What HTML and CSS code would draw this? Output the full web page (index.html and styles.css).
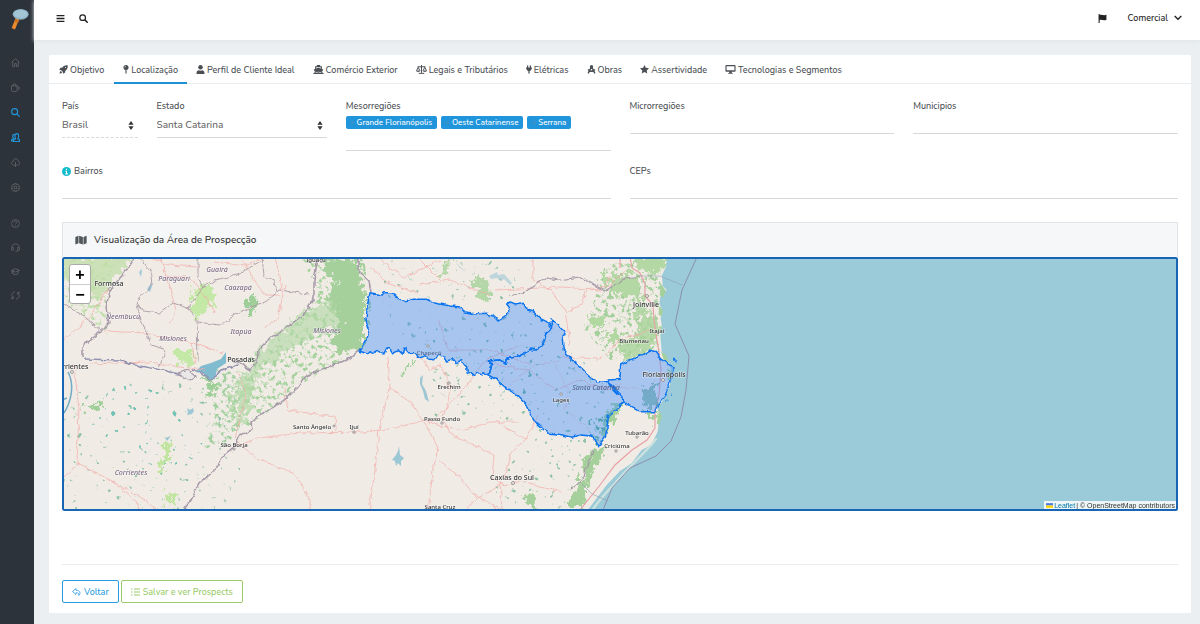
FILE: index.html
```
<!DOCTYPE html>
<html lang="pt-BR">
<head>
<meta charset="utf-8">
<meta name="viewport" content="width=device-width, initial-scale=1">
<title>Localização</title>
<link rel="stylesheet" href="styles.css">
</head>
<body>
<svg class="defs" aria-hidden="true">
  <symbol id="rocket" viewBox="0 0 16 16"><path d="M15.500.5C10.500 0 7.500 2 5.500 5H2.500L.5 9l3.500.3 2.700 2.700.3 3.500 4-2v-3c3-2 5-5 4.500-10zM3.300 10.500C1.500 11.500 1 13.500 1 15c1.500 0 3.500-.5 4.500-2.300z"/><circle cx="11.500" cy="4.500" r="1" fill="#fff"/></symbol>
  <symbol id="pin" viewBox="0 0 10 16"><circle cx="5" cy="4.500" r="4.500"/><path d="M4 9h2v5l-1 2-1-2z"/><path d="M5 2.200a2.300 2.300 0 0 0-2.300 2.300" fill="none" stroke="#fff" stroke-width=".8"/></symbol>
  <symbol id="user" viewBox="0 0 16 16"><circle cx="8" cy="4" r="4"/><path d="M1 16v-2.500C1 11 3 9.300 5 9.300c2 1 4 1 6 0 2 0 4 1.700 4 4.200V16z"/></symbol>
  <symbol id="ship" viewBox="0 0 18 16"><path d="M6 0h6v2h3v5l2.500 1-2 4c-1.500 0-2 1-3.200 1S10.500 12 9 12s-2 1-3.300 1S4 12 2.500 12l-2-4L3 7V2h3zM5 4v2.300L9 5l4 1.300V4zM0 14c2 0 2-1 3-1s2 1.300 3 1.300 2-1.300 3-1.300 2 1.300 3 1.300 2-1.300 3-1.300 1 1 3 1v2H0z"/></symbol>
  <symbol id="scale" viewBox="0 0 20 16"><path d="M10 0v14M3 3h14M5 15h10M1 10l3-6 3 6M13 10l3-6 3 6" fill="none" stroke="currentColor" stroke-width="1.800"/><path d="M0 10h8c-.5 3.500-7.500 3.500-8 0zM12 10h8c-.5 3.500-7.500 3.500-8 0z"/></symbol>
  <symbol id="plug" viewBox="0 0 12 16"><path d="M2 0h2.500v4h3V0H10v4h2v2.500h-1c0 2.500-1.500 4-3.700 4.500v5H4.700v-5C2.500 10.500 1 9 1 6.500H0V4h2z"/></symbol>
  <symbol id="compass" viewBox="0 0 16 16"><path d="M8 3L2 15M8 3l6 12M2 8c3 4 9 4 12 0" fill="none" stroke="currentColor" stroke-width="2.500"/><circle cx="8" cy="3" r="3"/></symbol>
  <symbol id="star" viewBox="0 0 16 16"><path d="M8 0l2.400 5.100 5.600.7-4.100 3.900 1 5.600L8 12.600l-4.900 2.700 1-5.600L0 5.800l5.600-.7z"/></symbol>
  <symbol id="screen" viewBox="0 0 18 16"><path d="M1.500 0h15C17.500 0 18 .7 18 1.500v9c0 .8-.5 1.500-1.500 1.500H11l.5 2H13v1.500H5V14h1.500l.5-2H1.500C.5 12 0 11.300 0 10.500v-9C0 .7.5 0 1.500 0zM2 2v7.500h14V2z"/></symbol>
  <symbol id="map-i" viewBox="0 0 18 16"><path d="M0 3l5-2v12l-5 2zM6 1l6 2v12l-6-2zM13 3l5-2v12l-5 2z"/></symbol>
  <symbol id="search" viewBox="0 0 16 16"><circle cx="6.500" cy="6.500" r="5" fill="none" stroke="currentColor" stroke-width="2.200"/><path d="M10 10l5.500 5.500" stroke="currentColor" stroke-width="2.600"/></symbol>
  <symbol id="reply" viewBox="0 0 18 16"><path d="M8 1L1 7l7 6v-3.500c5-.3 6 2 5.500 5.500 3-2.500 5-10-5.500-10.500z" fill="none" stroke="currentColor" stroke-width="1.600"/></symbol>
  <symbol id="list" viewBox="0 0 18 16"><path d="M0 2h3M0 8h3M0 14h3M6 2h12M6 8h12M6 14h12" stroke="currentColor" stroke-width="2"/></symbol>
  <symbol id="arrows" viewBox="0 0 8 12"><path d="M4 0l3.500 5h-7zM4 12L.5 7h7z"/></symbol>
  <symbol id="s-home" viewBox="0 0 16 16"><path d="M1 8l7-7 7 7M3 6.500V15h3.500v-5h3v5H13V6.500"/></symbol>
  <symbol id="s-cup" viewBox="0 0 16 16"><path d="M1 5h10v8c0 1-1 2-2 2H3c-1 0-2-1-2-2zM3 5c0-5 6-5 6 0M11 7h2c3 0 3 4 0 4h-2"/></symbol>
  <symbol id="s-search" viewBox="0 0 16 16"><circle cx="6.500" cy="6.500" r="5.300"/><path d="M10.500 10.500l5 5"/></symbol>
  <symbol id="s-users" viewBox="0 0 16 16"><path d="M4 15h11.500c0-3-1-4-3-4.500-1-1 1-2 1-5C13.500-.5 7-.5 7 5.500c0 3 2 4 1 5-3 .5-4 1.500-4 4.500zM6.500 3C3 2 2 6 4.500 9c0 2-4 1-4 5H4"/></symbol>
  <symbol id="s-cloud" viewBox="0 0 16 16"><path d="M5 12H4c-4 0-4-6 0-6 0-6 9-6 9 0 4 0 4 6 0 6h-2M8 7v8M5.500 12.500L8 15l2.500-2.500"/></symbol>
  <symbol id="s-gear" viewBox="0 0 16 16"><path d="M6.500 1h3l.5 2 2-1 2 2-1 2 2 .7v3L13 10l1 2-2 2-2-1-.5 2h-3L6 13l-2 1-2-2 1-2-2-.3v-3L3 6 2 4l2-2 2 1z"/><circle cx="8" cy="8" r="2.500"/></symbol>
  <symbol id="s-help" viewBox="0 0 16 16"><circle cx="8" cy="8" r="7"/><path d="M5.700 6c0-3.500 4.800-3 4.600 0C10.200 7.500 8 8 8 9.500M8 11.300v1.500"/></symbol>
  <symbol id="s-head" viewBox="0 0 16 16"><path d="M2 9C-1-1 17-1 14 9M2 8h2v5H2c-2-1-2-4 0-5zM14 8h-2v5h2c2-1 2-4 0-5zM13 13c-1 2-3 2-5 2"/></symbol>
  <symbol id="s-cap" viewBox="0 0 16 16"><path d="M1 6l7-3 7 3-7 3zM3.500 7v5c2 2 7 2 9 0V7M2 6.500V12"/></symbol>
  <symbol id="s-sync" viewBox="0 0 16 16"><path d="M7 1.500C1 2 0 9 3.500 13M4 9.500v4H0M9 14.500c6-.5 7-7.500 3.500-11.500M12 6.500v-4h4"/></symbol>
</svg>

<nav class="sidebar" aria-label="Menu principal">
  <a class="logo" href="#" aria-label="Início"><svg viewBox="0 0 54 64"><path d="M17 36L9 56" stroke="#e98b2c" stroke-width="11" stroke-linecap="square"/><ellipse cx="29" cy="18" rx="24" ry="16" fill="#8fb4c6"/><ellipse cx="29" cy="17" rx="20" ry="12" fill="#a3c6d6"/><path d="M13 32l12 4-4 8-10-3z" fill="#c9762a"/></svg></a>
  <div class="group main-links">
    <a href="#" aria-label="Painel"><svg><use href="#s-home"/></svg></a>
    <a href="#" aria-label="Café"><svg><use href="#s-cup"/></svg></a>
    <a href="#" class="on" aria-label="Buscar"><svg><use href="#s-search"/></svg></a>
    <a href="#" class="on" aria-label="Clientes"><svg><use href="#s-users"/></svg></a>
    <a href="#" aria-label="Download"><svg><use href="#s-cloud"/></svg></a>
    <a href="#" aria-label="Configurações"><svg><use href="#s-gear"/></svg></a>
  </div>
  <div class="group help-links">
    <a href="#" aria-label="Ajuda"><svg><use href="#s-help"/></svg></a>
    <a href="#" aria-label="Suporte"><svg><use href="#s-head"/></svg></a>
    <a href="#" aria-label="Treinamento"><svg><use href="#s-cap"/></svg></a>
    <a href="#" aria-label="Atualizar"><svg><use href="#s-sync"/></svg></a>
  </div>
</nav>

<div class="page">
  <header class="topbar">
    <button type="button" class="plain" aria-label="Menu"><svg class="ic" viewBox="0 0 16 16"><path d="M1 3h14M1 8h14M1 13h14" stroke="currentColor" stroke-width="2.400"/></svg></button>
    <button type="button" class="plain" aria-label="Pesquisar"><svg class="ic"><use href="#search"/></svg></button>
    <button type="button" class="plain flag" aria-label="Idioma"><svg class="ic" viewBox="0 0 16 16"><path d="M1 0h2v2c4-2 6 1.500 12-.5V10c-5 2.500-8-1-12 .5V16H1z"/></svg></button>
    <button type="button" class="plain account">Comercial <svg class="chev" viewBox="0 0 12 8"><path d="M1 1l5 5 5-5" fill="none" stroke="currentColor" stroke-width="2"/></svg></button>
  </header>

  <main class="card">
    <nav class="tabs" aria-label="Etapas">
      <a href="#"><svg class="ic"><use href="#rocket"/></svg>Objetivo</a>
      <a href="#" class="active" aria-current="page"><svg class="ic slim"><use href="#pin"/></svg>Localização</a>
      <a href="#"><svg class="ic"><use href="#user"/></svg>Perfil de Cliente Ideal</a>
      <a href="#"><svg class="ic wide"><use href="#ship"/></svg>Comércio Exterior</a>
      <a href="#"><svg class="ic wide"><use href="#scale"/></svg>Legais e Tributários</a>
      <a href="#"><svg class="ic slim"><use href="#plug"/></svg>Elétricas</a>
      <a href="#"><svg class="ic"><use href="#compass"/></svg>Obras</a>
      <a href="#"><svg class="ic"><use href="#star"/></svg>Assertividade</a>
      <a href="#"><svg class="ic wide"><use href="#screen"/></svg>Tecnologias e Segmentos</a>
    </nav>

    <form class="body">
      <div class="fields">
        <div class="field c1"><label for="pais">País</label>
          <div class="select dashed"><select id="pais"><option>Brasil</option></select><svg><use href="#arrows"/></svg></div></div>
        <div class="field c2"><label for="estado">Estado</label>
          <div class="select"><select id="estado"><option>Santa Catarina</option></select><svg><use href="#arrows"/></svg></div></div>
        <div class="field c3"><label for="meso">Mesorregiões</label>
          <div class="tagbox"><span class="tag"><i>×</i>Grande Florianópolis</span><span class="tag"><i>×</i>Oeste Catarinense</span><span class="tag"><i>×</i>Serrana</span><input id="meso" type="text"></div></div>
        <div class="field c3"><label for="micro">Microrregiões</label><input id="micro" type="text"></div>
        <div class="field c3"><label for="mun">Municipios</label><input id="mun" type="text"></div>
        <div class="field c6"><label for="bairros"><svg class="info" viewBox="0 0 16 16"><circle cx="8" cy="8" r="8" fill="#12bccb"/><path d="M8 3v2.500M6 7.500h2V12M6 12.300h4.500" fill="none" stroke="#fff" stroke-width="2"/></svg>Bairros</label><input id="bairros" type="text"></div>
        <div class="field c6"><label for="ceps">CEPs</label><input id="ceps" type="text"></div>
      </div>

      <section class="mapcard">
        <h2><svg><use href="#map-i"/></svg>Visualização da Área de Prospecção</h2>
        <div class="map">
          <svg class="tiles" viewBox="62 257 1116 254" preserveAspectRatio="xMinYMin slice" role="img" aria-label="Mapa da área de prospecção">
            <defs>
              <filter id="rag" x="0" y="240" width="1300" height="290" filterUnits="userSpaceOnUse" color-interpolation-filters="sRGB"><feTurbulence type="fractalNoise" baseFrequency=".16" numOctaves="4" seed="4"/><feDisplacementMap in="SourceGraphic" scale="20" xChannelSelector="R" yChannelSelector="G"/></filter>
              <filter id="jag" x="0" y="240" width="1300" height="290" filterUnits="userSpaceOnUse" color-interpolation-filters="sRGB"><feTurbulence type="fractalNoise" baseFrequency=".16" numOctaves="2" seed="9"/><feDisplacementMap in="SourceGraphic" scale="5" xChannelSelector="R" yChannelSelector="G"/></filter>
              <filter id="dots" x="0" y="240" width="1300" height="290" filterUnits="userSpaceOnUse"><feTurbulence type="fractalNoise" baseFrequency=".22" numOctaves="4" seed="7"/><feColorMatrix values="0 0 0 0 0 0 0 0 0 0 0 0 0 0 0 7 0 0 0 -3.700"/><feComposite in="SourceGraphic" operator="in"/></filter>
              <filter id="few" x="0" y="240" width="1300" height="290" filterUnits="userSpaceOnUse"><feTurbulence type="fractalNoise" baseFrequency=".18" numOctaves="2" seed="21"/><feColorMatrix values="0 0 0 0 0 0 0 0 0 0 0 0 0 0 0 10 0 0 0 -6.900"/><feComposite in="SourceGraphic" operator="in"/></filter>
            </defs>
            <rect x="0" y="250" width="3000" height="270" fill="#f0ebe5"/>

            <g filter="url(#few)" fill="#8fc3a4">
              <path d="M62 395L150 380 240 370 240 511H62zM370 257H520V300H370zM540 420L600 440 570 511H480zM430 340H560V420H430z"/>
            </g>
            <g filter="url(#dots)">
              <path d="M62 257H122L105 290 108 335 62 300z" fill="#bfdfaa"/>
              <path d="M205 365L255 375 240 430 225 445 200 450 215 420z" fill="#a3d0a0"/>
              <path d="M300 257L365 257 367 300 360 350 300 385 247 430 240 395 250 355 300 320 318 290z" fill="#a5d29d"/>
              <path d="M605 265L660 257 662 300 655 350 610 360 585 330z" fill="#a3cf9b"/>
            </g>
            <g filter="url(#few)" fill="#6fc3b6"><path d="M105 385H160V440H85zM105 395H150V425H95zM180 400L205 450 150 490 130 450z"/></g>
            <g filter="url(#rag)">
              <path d="M62 257H135L110 282 98 300 62 276z" fill="#c1dda9" opacity=".75"/>
              <path d="M195 288L212 285 214 305 198 318 190 312zM175 348L195 355 192 367 177 360z" fill="#c4e8a5"/>
              <path d="M166 441L170 441 170 457 161 474 157 471 165 455zM165 495L175 493 177 505 166 504z" fill="#c1e5a0"/>
              <path d="M328 257L358 259 362 280 366 298 366 320 361 350 350 350 341 352 332 345 340 320 324 300 338 280 323 270z" fill="#a5d09b"/>
              <path d="M300 315L335 300 338 325 305 340 260 370 250 400 243 392 255 355z" fill="#b4d8a7" opacity=".65"/>
              <path d="M246 299L256 297 257 312 247 315zM207 380L216 380 217 392 208 394zM402 370L412 361 412 365 405 374zM76 410L100 401 101 406 83 409z" fill="#9fcf98"/>
              <path d="M240 370L253 390 250 415 240 418 235 408zM235 385L228 403 238 428 245 422z" fill="#b0d8a5" opacity=".7"/>
              <path d="M472 280L488 278 492 298 485 302 475 290zM450 260L445 275 440 273 448 258z" fill="#b4d7a7"/>
              <path d="M600 275L640 275 643 303 620 295 605 282zM635 257H665L661 272 653 275 635 266z" fill="#b3d8a3"/>
              <path d="M630 305L650 312 660 320 655 350 638 355 622 358 620 342 640 335 640 320z" fill="#a9d39a" opacity=".8"/>
              <path d="M590 315L602 317 601 328 588 328zM605 335L620 335 625 342 610 342z" fill="#b2d8a2"/>
              <path d="M593 448L605 450 597 465 588 480 583 508 570 508 570 495 582 480 584 460zM525 493L537 495 533 505 524 500zM645 412L655 412 655 421 648 419zM608 408L600 430 604 440 611 425 625 403z" fill="#a5d09b"/>
            </g>

            <g transform="translate(560 255) scale(.33333)">
              <path d="M322 0L318 35 306 60 308 92 320 105 302 120 298 145 306 165 302 190 306 215 301 240 305 290 330 330 338 365 325 400 312 430 292 460 299 482 293 530 273 570 245 585 215 625 180 648 140 690 110 730 72 780H4000V0z" fill="#9bcbd9"/>
              <path d="M290 550C260 590 200 640 165 685C130 720 110 745 90 775" stroke="#cce2df" stroke-width="7" fill="none"/>
              <g fill="#a5d09b"><path d="M305 88l12 20-8 20-10-8 2-20zM297 155l12 10-4 20-9-8zM303 290l15 10 8 22-15-8zM322 340l15 10-6 28-9-5zM298 465l7 20-8 25-7-5z"/></g>
            </g>

            <g fill="#80bbcf">
              <path d="M195 372L201 366 211 363 221 359 226 352V363L217 369 215 379 208 380 203 373z"/>
              <path d="M187 408l3 2 3-2 1 3-2 3-5 1 1-3zM149 286l4-3-3 9-3-2zM139 272l3-3-1 8zM396 455l2-4 1-5 1 9 4 3-3 3v5l-3-3-2 3-1-5-3-1zM420 378l3-3-1 9 4 7 3 11-4-3-2-8-3-7zM165 438l6-2-4 5z" opacity=".75"/>
              <path d="M489 276l8-4 1 3 6-1 8 9-2 2-6-6-3 2-4-3-6 1zM455 262l5 6 6 4" opacity=".45"/>
            </g>
            <path d="M68 372C75 385 71 402 64 413M62 400l5-2" fill="none" stroke="#72a9c3" stroke-width="1.500"/>

            <g fill="none" stroke="#f3aaa8" stroke-width=".7" filter="url(#jag)">
              <path d="M108 289L88 319 62 341M105 331L145 333 190 342 223 353M160 257L168 282 176 310 170 324M192 342L195 365M150 257L168 265 198 267M165 276L190 277 200 290 209 302 214 312M90 364L150 362 180 367 205 370M74 365L79 410 77 463 110 480 137 502 140 511M110 480L145 500 158 511M62 480L79 462M215 262L245 266 262 257M239 373L246 395 235 438M236 440L256 458 295 474 310 500V511M236 446L260 438 300 433 365 432 395 428 425 420 440 426 465 430 490 422 520 422M388 357L390 388 384 410 379 430 375 470 369 511M390 388L410 402 426 425 438 448 433 470 428 511M284 388L288 410 335 417 336 430M372 269L387 282 418 293M240 257L264 295 280 295M285 285L278 318 265 328M275 257L282 290"/>
              <path d="M440 365L450 385 449 398 442 420 452 435 480 448 494 455 492 478 504 486 520 481 540 487 562 492M440 365L430 370 420 355M428 425L442 412 465 388 485 360 520 345M497 422L525 439 510 455 504 478M525 439L538 415M500 481L502 511M504 483L480 497 465 511M438 460L460 478 475 495 500 509M380 257L390 268 405 278 440 260M418 285L450 280 490 295M417 257L440 280"/>
              <path d="M486 361L505 366 530 371 555 390 580 380 600 388 621 384M440 320L447 350 490 350 530 364M560 357L600 359 620 340 650 330M533 257V280L550 290 565 310 570 345M567 312L580 305 587 290 610 286 625 270M495 290L540 288 562 287 600 290 612 275"/>
              <path d="M510 385L535 365 560 361M600 390L620 387 650 390 655 380M555 365L568 390 565 410 590 430" opacity=".6"/>
            </g>
            <path d="M620 257V268M630 257L632 268 640 273 645 284 645 296 653 305 654 320 657 340 659 352 661 370 659 395 655 410 655 428 647 440 632 450 615 465 600 485 580 510" fill="none" stroke="#e8a2a8" stroke-width="1.200"/>

            <g filter="url(#jag)" fill="none" stroke="#a69aa9" stroke-width="1.200">
              <path d="M135 257L127 270 120 278 110 290 106 308 109 323 97 335 83 345 83 358" stroke-width="1.500"/>
              <path d="M139 257L150 270 152 285 136 302 143 311 160 313 173 303 188 308 197 318 198 362M137 304L141 320 152 345 166 350 159 367M187 309L203 288 215 280 237 275 264 259M198 322L220 325 240 312 268 300 280 290 308 294M62 302L85 317 102 332M198 257V278L203 286M262 257L264 275 275 281 277 293" stroke="#a99ba5" stroke-width=".9"/>
              <path d="M318 257L314 280 314 298 303 315 286 328 268 340 258 350 257 362 250 370 239 363 230 358" stroke-width="1.500"/>
              <path d="M358 257V270L369 281 371 292M362 348L350 358 335 365 320 370 304 377 299 386 290 395 280 403 260 415 251 422 252 430 240 436 235 446 225 454 215 470 200 483 190 502 182 511" stroke-width="1.600"/>
              <path d="M84 359L120 360 140 366 162 370 186 376 193 370 202 373 210 380 222 370 237 365" stroke="#9392b0" stroke-width="1.700"/>
              <path d="M178 374L188 370 196 377 190 380z" fill="#e9e8e7"/>
              <path d="M510 297L525 292 545 278 560 280 580 277 605 291 625 278 640 276M593 450L586 468 583 480 570 490" stroke-width="1.200"/>
            </g>
            <path d="M697 257L682 290 675 324 689 356 686 390 681 417 671 441 656 456 630 468 612 488 603 510" fill="none" stroke="#8d8eae" stroke-width="1"/>
            <path d="M640 276H660L682 285M582 484L592 494 608 501" fill="none" stroke="#8d9eae" stroke-width=".6"/>

            <g filter="url(#jag)"><g transform="translate(350 280) scale(.33333)" fill="#3388ff" fill-opacity=".38" stroke="#0c74ee" stroke-width="4.500" stroke-linejoin="round">
              <path d="M60 38L95 45 105 38 125 38 145 55 165 65 190 58 230 58 250 68 300 78 325 80 345 95 375 102 410 100 430 105 447 123 470 108 480 85 470 72 480 66 500 72 520 67 530 90 550 95 570 115 590 125 605 140 600 150 588 160 580 190 560 210 540 208 520 220 500 230 470 238 465 250 450 240 415 243 425 255 418 278 410 282 402 275 395 287 385 278 375 288 360 275 352 280 350 260 338 252 335 242 318 248 310 237 290 243 283 232 265 225 258 237 235 235 222 226 205 232 196 218 170 218 168 205 160 205 157 222 147 212 125 222 120 208 108 205 100 222 80 214 73 222 60 212 50 222 30 213 50 180 58 150 48 120 52 75z"/>
              <path d="M605 140L602 120 625 130 635 145 647 155 637 175 640 210 660 235 685 255 710 280 740 305 775 305 790 325 815 350 815 368 800 390 775 410 770 450 765 475 745 500 735 475 720 468 690 465 665 472 640 465 600 460 580 448 560 430 540 400 535 380 520 365 500 345 470 325 440 300 410 282 418 278 425 255 415 243 450 240 465 250 470 238 500 230 520 220 540 208 560 210 580 190 588 160 600 150z"/>
              <path d="M775 300L810 298 812 255 840 240 870 228 900 210 920 215 930 235 950 250 972 262 965 290 955 320 945 345 925 370 915 395 890 395 870 395 850 383 820 370 815 350 790 325z"/>
              <path d="M973 237l7 2-4 5zM952 360l3 2M960 345l3 1" fill="none" stroke-width="3"/>
            </g></g>
            <g filter="url(#rag)" fill="#5d9fb8" opacity=".7"><path d="M642 388H655L659 405 650 408 641 403z"/></g>
            <g filter="url(#dots)" fill="#4f9eb2"><path d="M588 420L612 412 604 432 600 442 590 434z"/></g>
            <g filter="url(#few)" fill="#5a9fba" opacity=".7"><path d="M380 300H430L520 320 550 330 570 350 610 385 600 420 550 430 500 370 400 345z"/></g>

            <g fill="#f4f1ee" stroke="#777" stroke-width=".7"><circle cx="110" cy="289" r="1.500"/><circle cx="72" cy="372" r="1.500"/><circle cx="234" cy="449" r="1.200"/><circle cx="354" cy="432" r="1.200"/><circle cx="334" cy="426" r="1"/><circle cx="449" cy="383" r="1.200"/><circle cx="442" cy="423" r="1.200"/><circle cx="513" cy="483" r="1.500"/><circle cx="647" cy="296" r="1.500"/><circle cx="663" cy="380" r="1.500"/><circle cx="561" cy="394" r="1.200"/><circle cx="616" cy="451" r="1.200"/><circle cx="637" cy="437" r="1.200"/><circle cx="428" cy="346" r="1.200"/></g>
            <g class="region">
              <text x="174" y="281">Paraguarí</text><text x="217" y="272">Guairá</text><text x="238" y="290">Caazapá</text><text x="123" y="319">Ñeembucú</text><text x="173" y="341">Misiones</text><text x="241" y="334">Itapúa</text><text x="327" y="333">Misiones</text><text x="131" y="475">Corrientes</text><text x="596" y="390" class="state">Santa Catarina</text>
            </g>
            <g class="city">
              <text x="316" y="262">Iguaçu</text><text x="234" y="447">São Borja</text><text x="312" y="429">Santo Ângelo</text><text x="354" y="429">Ijuí</text><text x="429" y="355" class="dim">Chapecó</text><text x="449" y="389">Erechim</text><text x="442" y="421">Passo Fundo</text><text x="440" y="509">Santa Cruz</text><text x="561" y="402">Lages</text><text x="634" y="343">Blumenau</text><text x="657" y="333">Itajaí</text><text x="637" y="435">Tubarão</text><text x="617" y="448">Criciúma</text>
            </g>
            <g class="city big">
              <text x="109" y="286">Formosa</text><text x="62" y="369" class="start">rrientes</text><text x="241" y="362">Posadas</text><text x="512" y="480">Caxias do Sul</text><text x="646" y="307">Joinville</text><text x="664" y="377">Florianópolis</text>
            </g>
          </svg>
          <div class="zoom"><button type="button" aria-label="Aproximar">+</button><button type="button" aria-label="Afastar">−</button></div>
          <div class="credit"><svg viewBox="0 0 12 8"><path fill="#4c7be1" d="M0 0h12v4H0z"/><path fill="#ffd500" d="M0 4h12v4H0z"/></svg><a href="#">Leaflet</a><span>| © OpenStreetMap contributors</span></div>
        </div>
      </section>

      <div class="actions">
        <button type="button" class="btn back"><svg><use href="#reply"/></svg>Voltar</button>
        <button type="submit" class="btn save"><svg><use href="#list"/></svg>Salvar e ver Prospects</button>
      </div>
    </form>
  </main>
</div>
</body>
</html>
```
FILE: styles.css
```
* { box-sizing: border-box; }
body { margin: 0; min-height: 100vh; display: flex; background: #ebeff1; color: #4b4f54; font-family: Nunito, Lato, sans-serif; font-size: 9px; font-weight: 500; line-height: 12px; }
a { color: inherit; text-decoration: none; }
button, input, select { font: inherit; color: inherit; border: 0; padding: 0; margin: 0; background: none; }
.defs { position: absolute; width: 0; height: 0; }
svg { fill: currentColor; flex: none; }

.sidebar { width: 34px; flex: none; background: #2d333a; color: #777d82; display: flex; flex-direction: column; align-items: center; padding-top: 8px; }
.logo { height: 22px; padding-left: 5px; }
.logo svg { width: 18px; height: 22px; display: block; }
.group { display: grid; }
.group a { display: grid; place-items: center; padding-right: 4px; }
.group svg { width: 9px; height: 9px; fill: none; stroke: currentColor; stroke-width: 1; }
.main-links { grid-auto-rows: 25px; margin-top: 20px; }
.help-links { grid-auto-rows: 24px; margin-top: 11px; }
.group .on { color: #2196dc; }
.group .on svg { stroke-width: 2; }

.page { flex: 1; min-width: 0; }
.topbar { height: 40px; background: #fff; display: flex; align-items: center; padding: 0 18px 4px 22px; gap: 14px; color: #222; box-shadow: 0 1px 4px #dfe4e8; }
.plain { display: flex; align-items: center; gap: 6px; }
.ic { width: 9px; height: 9px; }
.ic.slim { width: 6px; }
.ic.wide { width: 11px; }
.flag { margin-left: auto; }
.account { margin-left: 7px; }
.chev { width: 8px; height: 6px; }

.card { margin: 15px 9px 11px 15px; background: #fff; }
.tabs { display: flex; height: 29px; border-bottom: 1px solid #e9ecee; }
.tabs a { display: flex; align-items: center; gap: 2px; padding: 2px 9px 0 9px; border-bottom: 2px solid transparent; margin-bottom: -1px; }
.tabs a:first-child { padding: 2px 10px 0; }
.tabs .active { border-color: #1e90d6; }

.body { padding: 15px 13px 10px; }
.fields { display: grid; grid-template-columns: repeat(12, minmax(0, 1fr)); column-gap: 19px; row-gap: 13px; align-items: start; }
.field { display: flex; flex-direction: column; }
.c1 { grid-column: span 1; } .c2 { grid-column: span 2; } .c3 { grid-column: span 3; } .c6 { grid-column: span 6; }
.field label { height: 14px; display: flex; align-items: center; gap: 3px; }
.field > input { height: 21px; width: 100%; border-bottom: 1px solid #d5d9dc; }
.info { width: 9px; height: 9px; }
.select { display: flex; align-items: center; height: 25px; border-bottom: 1px solid #d5d9dc; padding-right: 4px; font-size: 10px; color: #666; }
.select select { appearance: none; flex: 1; min-width: 0; }
.select svg { width: 6px; height: 9px; color: #333; }
.dashed { border-bottom-style: dashed; }
.tagbox { display: flex; flex-wrap: wrap; align-content: flex-start; gap: 4px; padding-top: 3px; min-height: 38px; border-bottom: 1px solid #d5d9dc; }
.tag { height: 13px; display: flex; align-items: center; gap: 2px; padding: 0 5px 0 4px; border-radius: 2px; background: #2095dc; color: #fff; font-size: 8px; }
.tag i { color: #568eb2; font-style: normal; }
.tagbox input { flex: 1; min-width: 20px; height: 13px; }

.mapcard { margin-top: 23px; }
.mapcard h2 { margin: 0; height: 35px; display: flex; align-items: center; gap: 7px; padding-left: 12px; border: 1px solid #e2e5e8; border-bottom: 0; background: #f5f7f8; font-size: 10px; font-weight: 500; color: #333; }
.mapcard h2 svg { width: 12px; height: 10px; color: #50565a; }
.map { position: relative; height: 254px; overflow: hidden; border-radius: 2px; }
.map::after { content: ""; position: absolute; inset: 0; border: 2px solid #1765b3; border-radius: 2px; pointer-events: none; }
.tiles { display: block; width: 100%; height: 100%; }
.tiles text { text-anchor: middle; font-family: "Noto Sans", sans-serif; paint-order: stroke; stroke: #fff; stroke-opacity: .6; stroke-width: 1px; }
.tiles .start { text-anchor: start; }
.region { font-size: 7px; font-style: italic; fill: #7b6b84; }
.city { font-size: 6px; fill: #333; }
.city.big { font-size: 7px; }
.tiles .dim, .tiles .state { fill: #586c95; stroke: none; }
.zoom { position: absolute; left: 7px; top: 7px; display: grid; border: 1px solid #aaa; border-radius: 3px; background: #fff; overflow: hidden; }
.zoom button { width: 20px; height: 19px; font: bold 16px/19px "Liberation Sans", sans-serif; color: #000; }
.zoom button + button { border-top: 1px solid #ccc; }
.credit { position: absolute; right: 2px; bottom: 1px; display: flex; align-items: center; gap: 1px; padding: 0 1px 0 2px; background: #edf5f7; color: #333; font: 7px/9px "Liberation Sans", sans-serif; }
.credit svg { width: 7px; height: 5px; }
.credit a { color: #0078a8; }

.actions { display: flex; gap: 2px; margin-top: 53px; padding-top: 15px; border-top: 1px solid #e9ecee; }
.btn { height: 23px; display: flex; align-items: center; gap: 3px; padding: 0 9px; border: 1px solid; border-radius: 2px; }
.btn svg { width: 9px; height: 8px; }
.back { color: #2b9be0; }
.save { color: #9bcb6b; }
```
